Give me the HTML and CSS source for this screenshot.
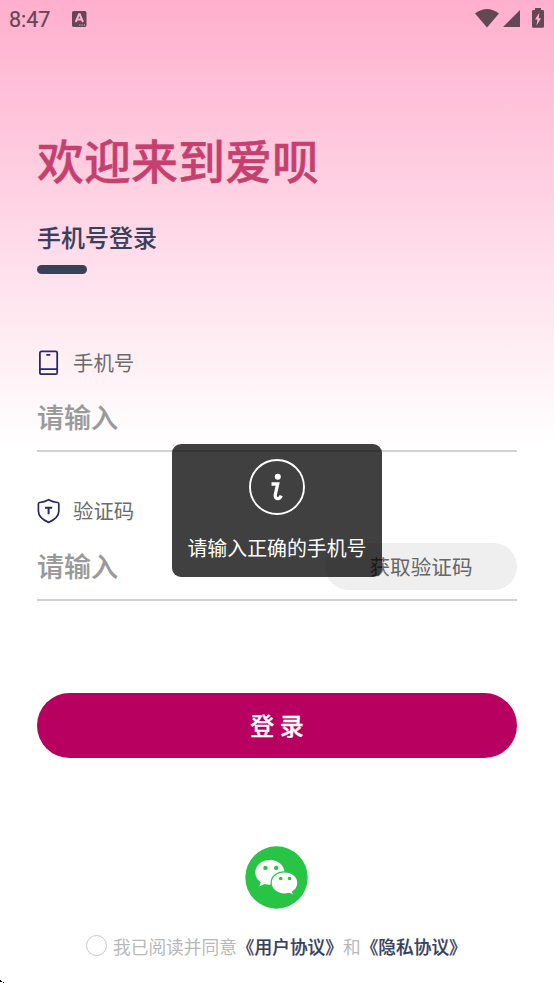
FILE: index.html
```html
<!DOCTYPE html>
<html lang="zh-CN">
<head>
<meta charset="utf-8">
<title>登录</title>
<link rel="stylesheet" href="styles.css">
</head>
<body>
<div class="screen">
  <header class="status">
    <span class="clock">8:47</span>
    <svg class="app" width="15" height="16" viewBox="0 0 15 16"><rect width="14.5" height="16" rx="1.8" fill="#644755"/><path d="M3.7 11 7 3.3h.7L11 11M5 8.5h4.8" fill="none" stroke="#ffb2cf" stroke-width="2"/><path d="M7.2 14h1.2m1.1 0h1.2m1.1 0H13" stroke="#ffb2cf" stroke-width="1.2"/></svg>
    <span class="signals">
      <svg width="24" height="19" viewBox="0 0 24 19"><path d="M0 4.5Q12-4.5 24 4.5L12 18.5Z" fill="#644755"/></svg>
      <svg width="17" height="17" viewBox="0 0 17 17"><path d="M17 0V17H0Z" fill="#644755"/></svg>
      <svg class="battery" width="12" height="20" viewBox="0 0 12 20"><path d="M3 0h6v2h1.500A1.300 1.300 0 0 1 12 3.300v15.200a1.300 1.300 0 0 1-1.300 1.300H1.300A1.300 1.300 0 0 1 0 18.500V3.300A1.300 1.300 0 0 1 1.300 2H3Z" fill="#644755"/><path d="M7.300 4.800 3 11.600h2.400L4.600 17.500 9 10.200H6.700Z" fill="#ffb2cf"/></svg>
    </span>
  </header>
  <main>
    <h1>欢迎来到爱呗</h1>
    <h2>手机号登录</h2>
    <div class="bar"></div>
    <section class="field">
      <div class="label">
        <svg width="23" height="26" viewBox="0 0 23 26" fill="none" stroke="#292a62" stroke-width="1.8"><rect x="2.900" y="1.400" width="17.300" height="22.800" rx="1.500"/><path d="M3 19.200H20M9.300 4.800h4"/></svg>
        <span>手机号</span>
      </div>
      <div class="input">请输入</div>
    </section>
    <section class="field code">
      <div class="label">
        <svg width="23" height="26" viewBox="0 0 23 26" fill="none" stroke="#292a62" stroke-width="1.700"><path d="M11.600 1.700C8.500 3.400 5.300 4.200 2.500 4.500Q1.400 4.700 1.400 6V13c0 5.500 4.400 8.900 10.200 11.400C17.400 21.900 21.800 18.500 21.800 13V6q0-1.300-1.100-1.500C17.900 4.200 14.700 3.400 11.600 1.700Z"/><path d="M8 9.700h7.200M11.600 9.700V16.300" stroke-width="2"/></svg>
        <span>验证码</span>
      </div>
      <div class="input">请输入<span class="get">获取验证码</span></div>
    </section>
    <div class="submit">登 录</div>
    <svg class="wechat" width="63" height="63" viewBox="0 0 63 63">
      <circle cx="31.500" cy="31.500" r="31.200" fill="#28c445"/>
      <path d="M25 14C16.500 14 10.300 19.500 10.300 26.500c0 4 2 7.300 5.400 9.700L14.200 40.500l5.500-2.500c1.700.5 3.400.8 5.300.8 8.500 0 14.500-5.400 14.500-12.300S33.500 14 25 14Z" fill="#fff"/>
      <path d="M39.500 25.800c-7.700 0-13.400 4.900-13.400 11.100s5.700 11.200 13.400 11.200c1.800 0 3.300-.3 4.800-.7l4.700 2.300-1.300-4c3.200-2.100 5.200-5.200 5.200-8.800 0-6.200-5.700-11.100-13.400-11.100Z" fill="#fff" stroke="#28c445" stroke-width="1.300"/>
      <g fill="#28c445"><circle cx="20.400" cy="21.900" r="2.200"/><circle cx="31.200" cy="21.900" r="2.200"/><circle cx="35.700" cy="32.500" r="1.800"/><circle cx="44.600" cy="32.500" r="1.800"/></g>
    </svg>
    <div class="agree"><i class="radio"></i><span>我已阅读并同意</span><b>《用户协议》</b><span>和</span><b>《隐私协议》</b></div>
  </main>
  <div class="toast">
    <svg width="56" height="56" viewBox="0 0 56 56"><circle cx="28" cy="28" r="27" fill="none" stroke="#fff" stroke-width="1.900"/><circle cx="28.800" cy="17.700" r="3" fill="#fff"/><path d="M22.500 25H28.700L26.300 35.500C25.300 40.500 30.500 41 32.200 36.700" fill="none" stroke="#fff" stroke-width="3.300"/></svg>
    <span>请输入正确的手机号</span>
  </div>
  <svg class="corner" width="5" height="5" viewBox="0 0 5 5"><path d="M0 1h1v1h1v1H0zM3 3h1v1H3z"/></svg>
</div>
</body>
</html>
```
FILE: styles.css
```css
* { box-sizing: border-box; }
body { margin: 0; font-family: "Noto Sans CJK SC", sans-serif; }
.screen {
  position: relative;
  width: 554px;
  height: 984px;
  overflow: hidden;
  background: linear-gradient(#ffafcd 0, #fff 443px);
}
.status {
  display: flex;
  align-items: center;
  height: 38px;
  padding: 0 10px 0 9px;
  color: #644755;
}
.clock { font: 400 21.500px/38px Roboto, sans-serif; width: 63px; padding-top: 2px; -webkit-text-stroke: .2px; }
.app { margin-top: -1px; }
.signals { display: flex; align-items: center; margin-left: auto; gap: 4px; }
.signals svg { display: block; margin-top: -1px; }
.signals .battery { margin-left: 8px; margin-top: -2px; }
main { display: flex; flex-direction: column; padding: 0 37px; }
h1 {
  margin: 86px 0 0;
  font-size: 47px;
  line-height: 70px;
  font-weight: 500;
  color: #c5406f;
  -webkit-text-stroke: .4px;
}
h2 {
  margin: 25px 0 0;
  font-size: 24px;
  line-height: 36px;
  font-weight: 500;
  color: #39415a;
  -webkit-text-stroke: .1px;
}
.bar { width: 50px; height: 9px; margin-top: 10px; border-radius: 5px; background: #39415a; }
.field { height: 109px; margin-top: 69px; border-bottom: 2px solid #d2d2d2; }
.field.code { margin-top: 40px; }
.label { display: flex; align-items: center; gap: 13px; height: 38px; font-size: 20.400px; color: #6b6b6b; }
.label svg { position: relative; top: 1px; }
.code .label { height: 36px; margin-bottom: 14px; }
.input {
  display: flex;
  align-items: center;
  justify-content: space-between;
  height: 47px;
  margin-top: 12px;
  font-size: 27px;
  font-weight: 500;
  color: #999;
  -webkit-text-stroke: .2px;
}
.get {
  width: 192px;
  height: 47px;
  margin-top: 2px;
  border-radius: 24px;
  background: #efefef;
  text-align: center;
  font-size: 20.600px;
  line-height: 47px;
  font-weight: 400;
  color: #666;
  -webkit-text-stroke: 0;
}
.code .input { margin-top: 0; }
.submit {
  height: 65px;
  margin-top: 92px;
  border-radius: 33px;
  background: #b80061;
  color: #fff;
  text-align: center;
  font-size: 24px;
  line-height: 63px;
  font-weight: 500;
  -webkit-text-stroke: .3px;
}
.wechat { align-self: center; margin: 88px 1px 0 0; }
.agree {
  display: flex;
  align-items: center;
  height: 30px;
  margin: 22px 0 0 49px;
  font-size: 17.700px;
  white-space: nowrap;
  color: #b8b8b8;
}
.agree b { font-weight: 500; color: #39415a; -webkit-text-stroke: .2px; }
.radio { width: 21px; height: 21px; margin: -1px 6px 0 0; border: 1px solid #c8c8c8; border-radius: 50%; }
.toast {
  position: absolute;
  left: 172px;
  top: 444px;
  width: 210px;
  height: 133px;
  padding-top: 15px;
  display: flex;
  flex-direction: column;
  align-items: center;
  border-radius: 9px;
  background: rgba(0, 0, 0, .75);
  color: #fff;
  font-size: 19.900px;
}
.toast span { line-height: 30px; margin-top: 18px; white-space: nowrap; }
.corner { position: absolute; left: 0; bottom: 0; }
```
